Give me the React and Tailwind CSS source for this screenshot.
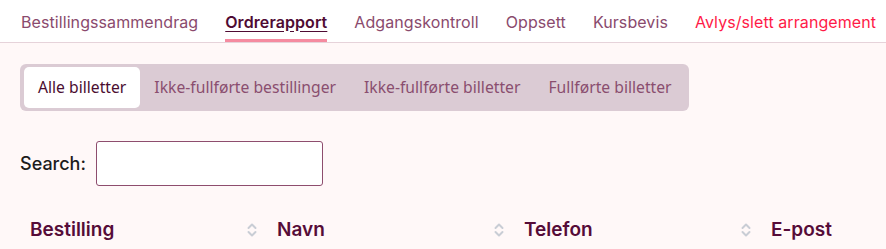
const navItems = [
  { label: 'Bestillingssammendrag' },
  { label: 'Ordrerapport', active: true },
  { label: 'Adgangskontroll' },
  { label: 'Oppsett' },
  { label: 'Kursbevis' },
  { label: 'Avlys/slett arrangement', danger: true },
]

const tabs = ['Alle billetter', 'Ikke-fullførte bestillinger', 'Ikke-fullførte billetter', 'Fullførte billetter']

const columns = ['Bestilling', 'Navn', 'Telefon', 'E-post']

function SortIcon() {
  return (
    <svg width="10" height="16" viewBox="0 0 10 16" fill="none" stroke="#c9cdd5" strokeWidth="2" strokeLinecap="round" strokeLinejoin="round">
      <path d="M1.5 6 L5 2.5 L8.5 6" />
      <path d="M1.5 10 L5 13.5 L8.5 10" />
    </svg>
  )
}

export default function App() {
  return (
    <div className="min-h-screen w-full overflow-hidden bg-[#fff8f8] font-['Inter',sans-serif]">
      {/* top nav */}
      <nav className="flex h-[43px] gap-[27px] border-b border-[#e6d3da] bg-white px-[21px] text-[16px] tracking-[0.08px]">
        {navItems.map((item) => (
          <a
            key={item.label}
            href="#"
            className={
              'flex h-[42px] items-center whitespace-nowrap border-b-[3px] pt-[4px] ' +
              (item.active
                ? 'border-[#f58ba0] font-semibold text-[#4f0b33] underline underline-offset-[3px]'
                : item.danger
                  ? 'border-transparent text-[#ff1a47]'
                  : 'border-transparent text-[#8a4a6d]')
            }
          >
            {item.label}
          </a>
        ))}
      </nav>

      <div className="px-[20px] pt-[21px]">
        {/* ticket filter tabs */}
        <div className="flex w-fit rounded-[6px] bg-[#dbcbd4] p-[3px] pl-[4px] font-['Noto_Sans',sans-serif] text-[15.7px]">
          {tabs.map((tab, i) => (
            <button
              key={tab}
              className={
                'h-[41px] whitespace-nowrap rounded-[5px] px-[14px] ' +
                (i === 0 ? 'bg-white text-[#4a0d30]' : 'text-[#8a4e6f]')
              }
            >
              {tab}
            </button>
          ))}
        </div>

        {/* search */}
        <div className="mt-[30px] flex items-center gap-[10px]">
          <label className="text-[18px] font-medium text-[#1c1c1c]">Search:</label>
          <input type="text" className="h-[45px] w-[227px] rounded-[3px] border border-[#8e4d6e] bg-white px-2" />
        </div>

        {/* table head */}
        <div className="mt-[26px] flex">
          {columns.map((col) => (
            <div key={col} className="flex h-[36px] w-[247px] shrink-0 items-center justify-between px-[10px]">
              <span className="text-[19px] font-semibold text-[#560c38]">{col}</span>
              <SortIcon />
            </div>
          ))}
        </div>
      </div>
    </div>
  )
}
